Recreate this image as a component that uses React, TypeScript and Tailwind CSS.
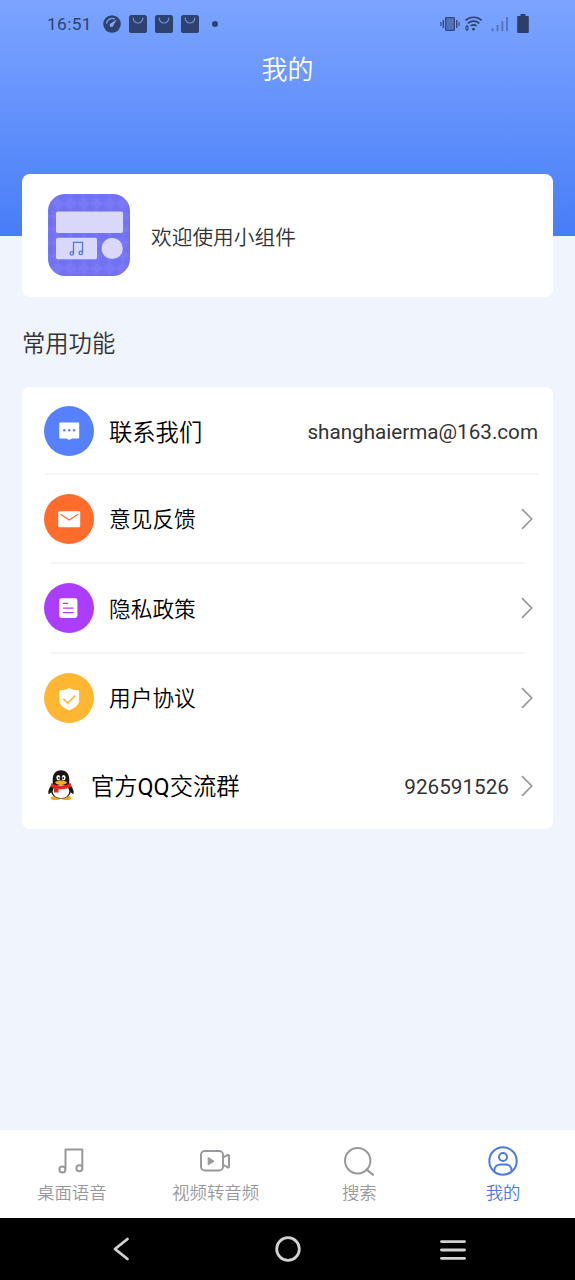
import type { ReactNode } from 'react';

function GaugeIcon() {
  return (
    <svg className="ml-[11px] h-[18px] w-[18px]" viewBox="0 0 18 18" fill="none">
      <circle cx="9" cy="9" r="8.8" fill="#2d426f" />
      <path d="M3.6 8.2A5.8 5.8 0 0 1 11.4 3.8" stroke="#7fa0f0" strokeWidth="1.3" strokeLinecap="round" />
      <path d="M13.9 4.2 10.4 10.2A1.9 1.9 0 1 1 8 8.3Z" fill="#86a6f5" />
    </svg>
  );
}

function BagIcon() {
  return (
    <svg className="h-[18px] w-[18px]" viewBox="0 0 18 18" fill="none">
      <rect width="18" height="18" rx="2.6" fill="#2d426f" />
      <path d="M4.2 3.2a4.8 4.8 0 0 0 9.6 0" stroke="#7596e2" strokeWidth="1.2" strokeLinecap="round" />
    </svg>
  );
}

function StatusBar() {
  return (
    <div className="flex h-[47px] items-center pr-[46px] pl-[47px] text-[#2d426f]">
      <span className="w-[45px] pt-[2px] text-[17.4px] leading-none tracking-[0.3px]">16:51</span>
      <GaugeIcon />
      <div className="ml-[8px] flex gap-[8px]">
        <BagIcon />
        <BagIcon />
        <BagIcon />
      </div>
      <span className="ml-[13px] h-[6px] w-[6px] rounded-full bg-[#2d426f]" />
      <div className="ml-auto flex items-center">
        <svg className="h-[16px] w-[20px]" viewBox="0 0 20 16" fill="none" stroke="#33487c" strokeWidth="1.2">
          <rect x="5.6" y="1.6" width="8.8" height="12.8" rx="0.6" fill="#5470b8" />
          <path d="M3.3 4v8M16.7 4v8" strokeWidth="1.4" />
          <path d="M.9 6v4M19.1 6v4" />
        </svg>
        <svg className="ml-[4px] h-[16px] w-[19px]" viewBox="0 0 19 16" fill="none" stroke="#2d426f" strokeWidth="1.7">
          <path d="M1.5 4.4C6.2 0.2 13 0.2 17.6 4.4" />
          <path d="M3.8 7.3C7.2 4.4 12 4.4 15.3 7.3" />
          <path d="M6.6 9.9C8.5 8.6 10.9 8.6 12.6 9.9" />
          <circle cx="9.5" cy="13.2" r="1.4" fill="#2d426f" stroke="none" />
          <path d="M0.8 11.6 3 8.8l2.2 2.8ZM0.8 12.5 3 15.2l2.2-2.7Z" fill="#2d426f" stroke="none" />
        </svg>
        <svg className="ml-[8px] h-[16px] w-[18px]" viewBox="0 0 18 16" fill="#5875c2">
          <path d="M.5 12.6h2.4v2.7H.5zM5.6 9h2v6.3h-2zM10.4 5.2h2v10.1h-2zM15 1h2v14.3h-2z" />
        </svg>
        <svg className="ml-[8px] h-[19px] w-[12px]" viewBox="0 0 12 19" fill="#2d3f68">
          <path d="M3.5 0h5v2H11a.8.8 0 0 1 .8.8v15.3a.8.8 0 0 1-.8.8H1a.8.8 0 0 1-.8-.8V2.8A.8.8 0 0 1 1 2h2.5Z" />
        </svg>
      </div>
    </div>
  );
}

function AppLogo() {
  return (
    <svg className="mb-[1px] h-[82px] w-[82px]" viewBox="0 0 82 82" fill="none">
      <defs>
        <pattern id="plaid" width="13" height="13" patternUnits="userSpaceOnUse">
          <rect width="13" height="13" fill="#7574f4" />
          <path d="M0 9.5h13M9.5 0v13" stroke="#8483f8" strokeWidth="3.5" opacity=".4" />
          <path d="M0 3h13M3 0v13" stroke="#6868ec" strokeWidth="3" opacity=".3" />
        </pattern>
      </defs>
      <rect width="82" height="82" rx="17" fill="url(#plaid)" />
      <g fill="#d9d8fb">
        <rect x="8" y="17.5" width="67" height="21.5" rx="2" />
        <rect x="8" y="43.8" width="41" height="21.5" rx="2" />
        <circle cx="64.2" cy="54.5" r="10.6" />
      </g>
      <g stroke="#5478cf" strokeWidth="1.3">
        <path d="M25.5 59.3V48.400h9v10.300" />
        <circle cx="23.8" cy="59.4" r="1.7" />
        <circle cx="32.8" cy="58.9" r="1.7" />
      </g>
    </svg>
  );
}

function Chevron() {
  return (
    <svg className="mr-[5px] h-[22px] w-[12px]" viewBox="0 0 12 22" fill="none">
      <path d="m1 1.2 9.7 9.8L1 20.8" stroke="#999" strokeWidth="1.7" />
    </svg>
  );
}

function RoundIcon({ color, children }: { color: string; children: ReactNode }) {
  return (
    <svg className="h-[50px] w-[50px]" viewBox="0 0 50 50" fill="none">
      <circle cx="25" cy="25" r="25" fill={color} />
      {children}
    </svg>
  );
}

const messageIcon = (
  <RoundIcon color="#5680fc">
    <path d="M16.2 16.5h18a1 1 0 0 1 1 1v14a1 1 0 0 1-1 1H28L25.2 34l-2.8-1.5h-6.2a1 1 0 0 1-1-1v-14a1 1 0 0 1 1-1Z" fill="#fff" />
    <g fill="#5680fc">
      <circle cx="20.3" cy="24.3" r="1.2" />
      <circle cx="25.2" cy="24.3" r="1.2" />
      <circle cx="30.1" cy="24.3" r="1.2" />
    </g>
  </RoundIcon>
);

const mailIcon = (
  <RoundIcon color="#ff6c2c">
    <rect x="14.2" y="17.3" width="22" height="16" rx="1.2" fill="#fff" />
    <path d="m16.5 20.2 8.7 5.8 8.9-5.8" stroke="#ff6c2c" strokeWidth="1.3" />
  </RoundIcon>
);

const documentIcon = (
  <RoundIcon color="#ad3dfd">
    <rect x="15.2" y="15.3" width="18.2" height="19.6" rx="2.4" fill="#fff" />
    <path d="M19 20.4h5.2M19 25.1h10.5M19 29.7h10.5" stroke="#ad3dfd" strokeWidth="1.2" />
  </RoundIcon>
);

const shieldIcon = (
  <RoundIcon color="#ffb632">
    <path
      d="M25.2 15c2.5 1.6 5.7 2.3 9.9 2.3v10.2c0 4.8-4.5 7.5-9.9 9.8-5.4-2.3-9.8-5-9.8-9.8V17.3c4.2 0 7.3-.7 9.8-2.3Z"
      fill="#fff"
    />
    <path d="m19.3 25.9 4.5 4.3 7.3-7.6" stroke="#ffb632" strokeWidth="1.5" />
  </RoundIcon>
);

function PenguinIcon() {
  return (
    <svg className="mb-[2px] ml-[4px] h-[30px] w-[26px]" viewBox="0 0 26 30">
      <ellipse cx="7.5" cy="27.9" rx="4.8" ry="2" fill="#f7a81b" />
      <ellipse cx="18.5" cy="27.9" rx="4.8" ry="2" fill="#f7a81b" />
      <path d="M4.5 14C1.7 17 .1 20 .3 23.2c.2 1.3 1.4.9 3.2-1.5M21.5 14c2.8 3 4.4 6 4.2 9.2-.2 1.3-1.4.9-3.2-1.5" fill="#181818" />
      <path d="M13 .3c5.5 0 8.300 4 8.300 9.300v5c1.700 2.500 2.300 5 1.500 7.600-1.300 4-5 6.300-9.800 6.300S4.500 26.200 3.200 22.200c-.8-2.600-.2-5.100 1.500-7.600v-5C4.700 4.300 7.500.3 13 .3Z" fill="#181818" />
      <ellipse cx="13" cy="21.5" rx="8.3" ry="6.6" fill="#fff" />
      <ellipse cx="10.3" cy="7.6" rx="1.9" ry="2.7" fill="#fff" />
      <ellipse cx="15.7" cy="7.6" rx="1.9" ry="2.7" fill="#fff" />
      <circle cx="10.8" cy="8" r=".9" fill="#181818" />
      <circle cx="15.2" cy="8" r=".9" fill="#181818" />
      <path d="M3.4 13c5.5 3.5 13.7 3.5 19.2 0l1 3.6c-3.4 2.3-8 3-13.1 2.6v3.2H6v-4.3c-1.2-.4-2.4-.8-3.5-1.4Z" fill="#e5291d" />
      <path d="M7 12.3c2.4-2.4 9.6-2.4 12 0-1.3 3.6-10.7 3.6-12 0Z" fill="#f7b21b" />
    </svg>
  );
}

function MusicIcon() {
  return (
    <svg className="h-[30px] w-[30px]" viewBox="0 0 30 30" fill="none" stroke="currentColor" strokeWidth="2">
      <path d="M8.500 22.5V3.5h16.800v17.500" strokeLinejoin="round" />
      <circle cx="5.4" cy="23.4" r="3" />
      <circle cx="22.4" cy="22.3" r="3" />
    </svg>
  );
}

function VideoIcon() {
  return (
    <svg className="mr-[1px] h-[30px] w-[32px]" viewBox="0 0 32 30" fill="none" stroke="currentColor" strokeWidth="2">
      <rect x="2" y="5" width="22" height="19.5" rx="3.8" />
      <path d="M24.5 11.2 28.8 9a.8.8 0 0 1 1.2.8v10.8a.8.8 0 0 1-1.2.8L24.5 19" />
      <path d="m9.2 11.5 5.8 3.7-5.8 3.7Z" fill="currentColor" strokeWidth="1" strokeLinejoin="round" />
    </svg>
  );
}

function SearchIcon() {
  return (
    <svg className="h-[30px] w-[30px]" viewBox="0 0 30 30" fill="none" stroke="currentColor" strokeWidth="2">
      <circle cx="13.7" cy="14.7" r="12.7" />
      <path d="m22.6 23.6 6.3 5.1" strokeWidth="2.2" strokeLinecap="round" />
    </svg>
  );
}

function ProfileIcon() {
  return (
    <svg className="h-[30px] w-[30px]" viewBox="0 0 30 30" fill="none" stroke="currentColor" strokeWidth="2">
      <circle cx="15" cy="15" r="13.7" />
      <circle cx="15" cy="11" r="4" />
      <path d="M6.3 25.2C6.3 20.5 9.5 18.5 12.3 18.5h5.400c2.800 0 6 2 6 6.700" />
    </svg>
  );
}

const rows = [
  { label: '意见反馈', icon: mailIcon },
  { label: '隐私政策', icon: documentIcon },
  { label: '用户协议', icon: shieldIcon },
];

const tabs = [
  { label: '桌面语音', icon: <MusicIcon /> },
  { label: '视频转音频', icon: <VideoIcon /> },
  { label: '搜索', icon: <SearchIcon /> },
  { label: '我的', icon: <ProfileIcon />, active: true },
];

export default function App() {
  return (
    <div className="flex h-[1280px] w-[575px] flex-col bg-[#eff4fd] font-[Roboto,'Noto_Sans_CJK_SC',sans-serif] text-[#333]">
      <header className="h-[236px] shrink-0 bg-linear-to-b from-[#7ca4ff] to-[#487df8]">
        <StatusBar />
        <h1 className="pt-[3px] text-center text-[26px] leading-[40px] font-[350] text-white">我的</h1>
      </header>

      <main className="flex-1 px-[22px]">
        <section className="relative -mt-[62px] flex h-[123px] items-center rounded-lg bg-white pl-[26px]">
          <AppLogo />
          <span className="ml-[21px] pt-[7px] text-[20.7px] font-[350]">欢迎使用小组件</span>
        </section>

        <h2 className="mt-[29px] text-[23.3px] leading-[36px] font-[350]">常用功能</h2>

        <section className="mt-[25px] h-[442px] rounded-lg bg-white pr-[15px] pl-[22px] text-black">
          <div className="flex h-[88px] items-center border-b-2 border-[#f5f5f7] pt-[1px]">
            {messageIcon}
            <span className="ml-[15px] pt-[5px] text-[23.3px] font-[350]">联系我们</span>
            <span className="ml-auto pt-[4px] text-[20.65px] text-[#333]">shanghaierma@163.com</span>
          </div>
          {rows.map((row, i) => (
            <div key={row.label} className="h-[89.5px]">
              <div className="flex h-[87px] items-center">
                {row.icon}
                <span className="ml-[15px] pt-[4px] text-[21.7px] font-[350]">{row.label}</span>
                <span className="ml-auto">
                  <Chevron />
                </span>
              </div>
              {i < rows.length - 1 && <div className="mr-[14px] ml-[7px] h-[2px] bg-[#f5f5f7]" />}
            </div>
          ))}
          <div className="flex h-[85px] items-center">
            <PenguinIcon />
            <span className="ml-[17px] pt-[3px] text-[23.3px] font-[350]">
              官方<span className="font-normal">QQ</span>交流群
            </span>
            <span className="mr-[12px] ml-auto pt-[3px] text-[20.7px] text-[#333]">926591526</span>
            <Chevron />
          </div>
        </section>
      </main>

      <nav className="grid h-[88px] shrink-0 grid-cols-4 bg-white">
        {tabs.map((tab) => (
          <button
            key={tab.label}
            className={`flex flex-col items-center pt-[16px] ${tab.active ? 'text-[#4d7ae0]' : 'text-[#98989d]'}`}
          >
            {tab.icon}
            <span className="mt-[4px] text-[17.4px] leading-[26px] font-[350]">{tab.label}</span>
          </button>
        ))}
      </nav>

      <div className="flex h-[62px] shrink-0 items-center justify-between bg-black pr-[109px] pl-[113px]">
        <svg className="h-[24px] w-[22px]" viewBox="0 0 22 24" fill="none">
          <path d="M14.5 2 2 12l12.5 10" stroke="#d2d2d2" strokeWidth="2.8" strokeLinecap="round" strokeLinejoin="round" />
        </svg>
        <svg className="h-[26px] w-[26px]" viewBox="0 0 26 26" fill="none">
          <circle cx="13" cy="13" r="11.3" stroke="#d2d2d2" strokeWidth="2.8" />
        </svg>
        <svg className="mt-[2px] h-[20px] w-[26px]" viewBox="0 0 26 20" fill="none">
          <path d="M1.5 1.6h23M1.5 10h23M1.5 18.4h23" stroke="#d2d2d2" strokeWidth="2.9" strokeLinecap="round" />
        </svg>
      </div>
    </div>
  );
}
